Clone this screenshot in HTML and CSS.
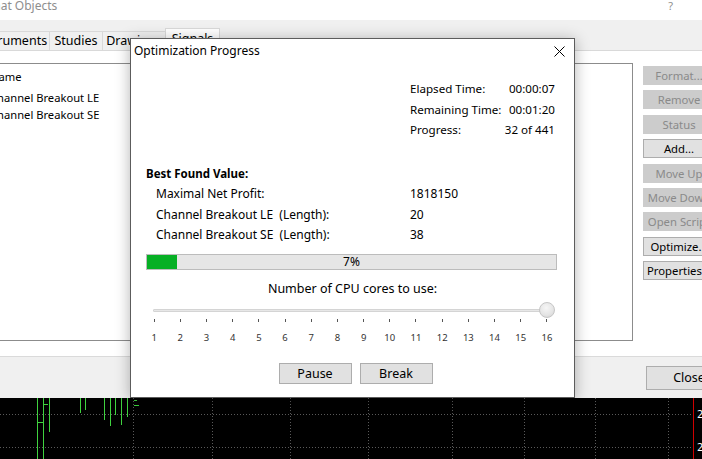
FILE: index.html
```html
<!DOCTYPE html>
<html>
<head>
<meta charset="utf-8">
<link rel="stylesheet" href="styles.css">
</head>
<body>
<div class="desk">
  <div class="fo-window">
    <div class="fo-title">
      <span class="fo-title-text">Format Objects</span>
      <span class="fo-help">?</span>
    </div>
    <div class="tabstrip">
      <div class="tab tab-instr">Instruments</div>
      <div class="tab tab-studies">Studies</div>
      <div class="tab tab-draw">Drawings</div>
      <div class="tab tab-active tab-signals">Signals</div>
    </div>
    <div class="page">
      <div class="listbox">
        <div class="lb-head">Name</div>
        <div class="lb-item">Channel Breakout LE</div>
        <div class="lb-item">Channel Breakout SE</div>
      </div>
      <div class="side-buttons">
        <div class="sbtn sbtn-dis">Format...</div>
        <div class="sbtn sbtn-dis">Remove</div>
        <div class="sbtn sbtn-dis">Status</div>
        <div class="sbtn">Add...</div>
        <div class="sbtn sbtn-dis">Move Up</div>
        <div class="sbtn sbtn-dis">Move Down</div>
        <div class="sbtn sbtn-dis">Open Script</div>
        <div class="sbtn">Optimize...</div>
        <div class="sbtn">Properties...</div>
      </div>
    </div>
    <div class="footer">
      <div class="close-btn">Close</div>
    </div>
  </div>
  <div class="chart">
    <svg class="chart-svg" width="702" height="61" viewBox="0 0 702 61">
      <g stroke="#5a5a5a" stroke-width="1" stroke-dasharray="1 2">
        <line x1="0" y1="16.5" x2="692" y2="16.5"/>
        <line x1="0" y1="49.5" x2="692" y2="49.5"/>
        <line x1="133.5" y1="0" x2="133.5" y2="61"/>
        <line x1="212.5" y1="0" x2="212.5" y2="61"/>
        <line x1="290.5" y1="0" x2="290.5" y2="61"/>
        <line x1="368.5" y1="0" x2="368.5" y2="61"/>
        <line x1="452.5" y1="0" x2="452.5" y2="61"/>
        <line x1="524.5" y1="0" x2="524.5" y2="61"/>
        <line x1="595.5" y1="0" x2="595.5" y2="61"/>
        <line x1="668.5" y1="0" x2="668.5" y2="61"/>
      </g>
      <g stroke="#3fd23f" stroke-width="1">
        <line x1="37.5" y1="0" x2="37.5" y2="61"/>
        <line x1="43.5" y1="0" x2="43.5" y2="61"/>
        <line x1="49.5" y1="0" x2="49.5" y2="34"/>
        <line x1="80.5" y1="0" x2="80.5" y2="15"/>
        <line x1="85.5" y1="0" x2="85.5" y2="12"/>
        <line x1="104.5" y1="0" x2="104.5" y2="22"/>
        <line x1="110.5" y1="0" x2="110.5" y2="28"/>
        <line x1="115.5" y1="0" x2="115.5" y2="17"/>
        <line x1="121.5" y1="0" x2="121.5" y2="27"/>
        <line x1="127.5" y1="0" x2="127.5" y2="19"/>
        <line x1="38" y1="24.5" x2="44" y2="24.5"/>
        <line x1="44" y1="6.5" x2="48" y2="6.5"/>
        <line x1="134" y1="7.5" x2="139" y2="7.5"/>
        <line x1="134" y1="2.5" x2="137" y2="2.5"/>
      </g>
      <line x1="693.5" y1="0" x2="693.5" y2="61" stroke="#d00000" stroke-width="1"/>
      <text x="697" y="20" class="chart-lbl">2</text>
      <text x="697" y="53" class="chart-lbl">2</text>
    </svg>
  </div>

  <div class="dialog">
    <div class="dlg-titlebar">
      <span class="dlg-title">Optimization Progress</span>
      <svg class="dlg-x" width="11" height="11" viewBox="0 0 11 11">
        <path d="M0.5 0.5 L10.5 10.5 M10.5 0.5 L0.5 10.5" stroke="#000" stroke-width="1" fill="none"/>
      </svg>
    </div>
    <div class="stats">
      <span>Elapsed Time:</span><span class="val">00:00:07</span>
      <span>Remaining Time:</span><span class="val">00:01:20</span>
      <span>Progress:</span><span class="val">32 of 441</span>
    </div>
    <div class="best">
      <div class="best-head">Best Found Value:</div>
      <div class="best-rows">
        <span>Maximal Net Profit:</span><span>1818150</span>
        <span>Channel Breakout LE&nbsp; (Length):</span><span>20</span>
        <span>Channel Breakout SE&nbsp; (Length):</span><span>38</span>
      </div>
    </div>
    <div class="progress">
      <div class="progress-fill" style="width:7.3%"></div>
      <div class="progress-text">7%</div>
    </div>
    <div class="cpu-label">Number of CPU cores to use:</div>
    <div class="slider">
      <div class="track"></div>
      <div class="thumb"></div>
    </div>
    <div class="ticks">
      <div class="tick"><i></i><span>1</span></div>
      <div class="tick"><i></i><span>2</span></div>
      <div class="tick"><i></i><span>3</span></div>
      <div class="tick"><i></i><span>4</span></div>
      <div class="tick"><i></i><span>5</span></div>
      <div class="tick"><i></i><span>6</span></div>
      <div class="tick"><i></i><span>7</span></div>
      <div class="tick"><i></i><span>8</span></div>
      <div class="tick"><i></i><span>9</span></div>
      <div class="tick"><i></i><span>10</span></div>
      <div class="tick"><i></i><span>11</span></div>
      <div class="tick"><i></i><span>12</span></div>
      <div class="tick"><i></i><span>13</span></div>
      <div class="tick"><i></i><span>14</span></div>
      <div class="tick"><i></i><span>15</span></div>
      <div class="tick"><i></i><span>16</span></div>
    </div>
    <div class="dlg-buttons">
      <div class="dbtn">Pause</div>
      <div class="dbtn">Break</div>
    </div>
  </div>
</div>
</body>
</html>
```

FILE: styles.css
```css
* { box-sizing: border-box; }
html, body {
  margin: 0;
  padding: 0;
}
body {
  width: 702px;
  height: 459px;
  overflow: hidden;
  font-family: "Noto Sans", "Open Sans", sans-serif;
  background: #f0f0f0;
  color: #000;
}
.desk {
  position: relative;
  width: 702px;
  height: 459px;
  overflow: hidden;
  display: flex;
  flex-direction: column;
}

/* background window */
.fo-window {
  flex: none;
  margin-left: -42px;
  width: 790px;
  height: 398px;
  display: flex;
  flex-direction: column;
  background: #f0f0f0;
}
.fo-title {
  height: 20px;
  flex: none;
  background: #fff;
  display: flex;
  align-items: flex-start;
  padding-left: 13px;
  font-size: 12px;
  line-height: 12px;
  color: #8e8e8e;
}
.fo-help {
  margin-left: auto;
  margin-right: 75px;
  font-size: 11px;
}
.tabstrip {
  height: 31px;
  flex: none;
  display: flex;
  align-items: flex-end;
  padding-left: 14px;
  border-bottom: 1px solid #d9d9d9;
}
.tab {
  height: 19px;
  border: 1px solid #d9d9d9;
  border-bottom: none;
  margin-right: -1px;
  background: #f0f0f0;
  font-size: 12.5px;
  line-height: 17px;
  text-align: center;
  white-space: nowrap;
  overflow: hidden;
}
.tab-instr { width: 78px; }
.tab-studies { width: 54px; }
.tab-draw { width: 64px; }
.tab-signals { width: 55px; }
.tab-active {
  height: 23px;
  margin-bottom: -1px;
  background: #fff;
  line-height: 19px;
  position: relative;
}
.page {
  height: 306px;
  flex: none;
  background: #fff;
  border-bottom: 1px solid #dadada;
  display: flex;
  align-items: flex-start;
  padding: 12px 0 0 28px;
}
.listbox {
  width: 647px;
  height: 278px;
  border: 1px solid #8c8c8c;
  padding: 4px 0 0 3px;
  font-size: 11.2px;
  line-height: 17px;
  flex: none;
}
.lb-head { margin-bottom: 3.5px; }
.side-buttons {
  margin: 3px 0 0 10px;
  display: flex;
  flex-direction: column;
  gap: 5.4px;
}
.sbtn {
  width: 72px;
  height: 19px;
  border: 1px solid #adadad;
  background: #e1e1e1;
  font-size: 11.3px;
  line-height: 17px;
  text-align: center;
  white-space: nowrap;
  overflow: hidden;
  display: flex;
  justify-content: center;
}
.sbtn-dis {
  background: #cccccc;
  border-color: #cccccc;
  color: #8a8a8a;
}
.footer {
  flex: 1;
  display: flex;
  justify-content: flex-end;
  padding: 9px 16px 0 0;
}
.close-btn {
  width: 86px;
  height: 24px;
  border: 1px solid #adadad;
  background: #e1e1e1;
  font-size: 12.5px;
  line-height: 22px;
  text-align: center;
}

/* chart */
.chart {
  flex: 1;
  background: #000;
  overflow: hidden;
}
.chart-svg { display: block; }
.chart-lbl {
  fill: #fff;
  font-family: "DejaVu Sans", sans-serif;
  font-size: 10px;
}

/* dialog */
.dialog {
  position: absolute;
  left: 130px;
  top: 38px;
  width: 445px;
  height: 360px;
  border: 1px solid #5c5c5c;
  background: #fff;
  box-shadow: 0 2px 14px rgba(0, 0, 0, 0.3);
  display: flex;
  flex-direction: column;
  font-size: 12px;
  line-height: 20.5px;
}
.dialog > * { flex: none; }
.dlg-titlebar {
  height: 25px;
  display: flex;
  align-items: center;
  justify-content: space-between;
  padding: 0 9px 0 3px;
}
.dlg-title { font-size: 12px; }
.dlg-x { display: block; }
.stats {
  margin: 15px 0 0 279px;
  width: 145px;
  display: grid;
  grid-template-columns: auto auto;
  justify-content: space-between;
  white-space: nowrap;
  font-size: 11.6px;
}
.stats .val { text-align: right; }
.best {
  margin: 23.5px 0 0 15px;
}
.best-head {
  font-weight: 700;
  font-size: 11.5px;
  line-height: 20px;
}
.best-rows {
  margin-left: 10px;
  display: grid;
  grid-template-columns: 254px auto;
  white-space: nowrap;
}
.progress {
  margin: 8.5px 0 0 15px;
  width: 411px;
  height: 16px;
  border: 1px solid #bcbcbc;
  background: #e6e6e6;
  display: grid;
}
.progress-fill {
  grid-area: 1 / 1;
  background: #06b025;
  height: 100%;
}
.progress-text {
  grid-area: 1 / 1;
  text-align: center;
  line-height: 14px;
  font-size: 12px;
}
.cpu-label {
  margin-top: 9px;
  text-align: center;
  line-height: 20px;
  font-size: 12.5px;
}
.slider {
  margin: 2px 0 0 22px;
  width: 396px;
  height: 18px;
  position: relative;
}
.track {
  margin-top: 7.5px;
  height: 3px;
  background: #e7e7e7;
  border: 1px solid #d4d4d4;
  border-radius: 1px;
  width: 390px;
}
.thumb {
  position: absolute;
  left: 386px;
  top: 1px;
  width: 16px;
  height: 16px;
  border-radius: 50%;
  background: radial-gradient(circle at 45% 35%, #f6f6f6 0%, #e4e4e4 60%, #cfcfcf 100%);
  border: 1px solid #c6c6c6;
}
.ticks {
  margin-left: 10px;
  display: grid;
  grid-template-columns: repeat(16, 26.2px);
}
.tick {
  display: flex;
  flex-direction: column;
  align-items: center;
}
.tick i {
  display: block;
  width: 1px;
  height: 3px;
  background: #555;
}
.tick span {
  margin-top: 9px;
  font-size: 9.5px;
  line-height: 14px;
  color: #333;
}
.dlg-buttons {
  margin-top: 18px;
  display: flex;
  justify-content: center;
  gap: 8px;
  padding-left: 6px;
}
.dbtn {
  width: 73px;
  height: 21px;
  border: 1px solid #adadad;
  background: #e1e1e1;
  font-size: 12.5px;
  line-height: 19px;
  text-align: center;
}
```
